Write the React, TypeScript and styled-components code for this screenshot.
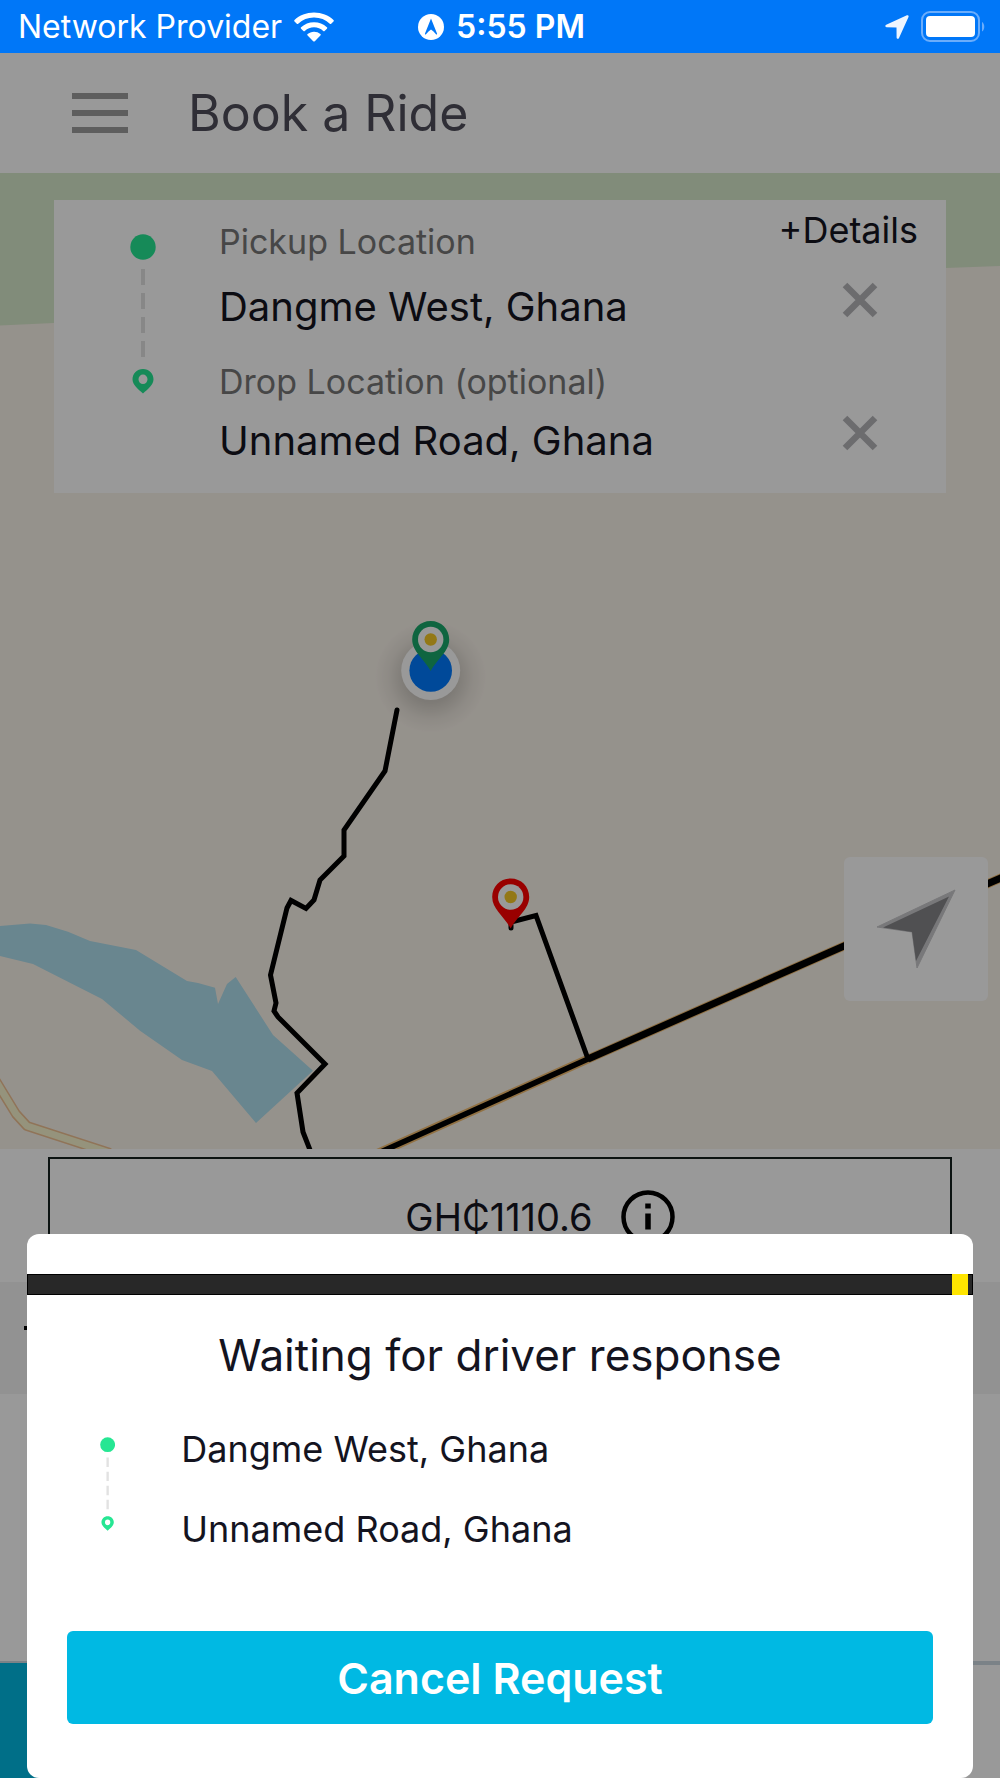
import React from 'react';
import styled, { createGlobalStyle } from 'styled-components';

const GlobalStyle = createGlobalStyle`
  *, *::before, *::after { box-sizing: border-box; }
  body { margin: 0; background: #fff; font-family: Inter, Roboto, 'Liberation Sans', sans-serif; }
  button, input { font: inherit; color: inherit; border: 0; padding: 0; background: none; }
  button { cursor: pointer; }
  svg { display: block; flex: none; }
`;

const Screen = styled.div`
  display: flex;
  flex-direction: column;
  min-height: 100vh;
  color: #14141f;
`;

const StatusBar = styled.header`
  display: grid;
  grid-template-columns: 1fr auto 1fr;
  align-items: center;
  height: 53px;
  padding: 0 15px 0 18px;
  background: #0077f8;
  color: #fff;
  font-size: 32px;
`;

const StatusGroup = styled.div<{ $end?: boolean; $strong?: boolean }>`
  display: flex;
  align-items: center;
  gap: 12px;
  justify-content: ${(p) => (p.$end ? 'flex-end' : 'flex-start')};
  font-weight: ${(p) => (p.$strong ? 600 : 400)};
  white-space: nowrap;
`;

const Stage = styled.main`
  position: relative;
  display: flex;
  flex-direction: column;
  flex: 1;
`;

const Header = styled.div`
  display: flex;
  align-items: center;
  gap: 60px;
  height: 120px;
  padding: 0 72px;
`;

const IconButton = styled.button`
  display: flex;
  flex: none;
  align-items: center;
  justify-content: center;
`;

const PageTitle = styled.h1`
  margin: 0;
  color: #4f4e5a;
  font-size: 50px;
  font-weight: 400;
`;

const MapArea = styled.section`
  position: relative;
  flex: 1;
  min-height: 900px;
  padding: 27px 54px;
`;

const MapCanvas = styled.svg`
  position: absolute;
  inset: 0;
  width: 100%;
  height: 100%;
`;

const TripCard = styled.form`
  position: relative;
  display: flex;
  gap: 63px;
  height: 293px;
  padding: 10px 28px 0 76px;
  background: #fff;
`;

const RailSlot = styled.div`
  padding-top: 24px;
`;

const Fields = styled.div`
  display: flex;
  flex-direction: column;
  gap: 12px;
  flex: 1;
  min-width: 0;
  padding-top: 12px;
`;

const Field = styled.div<{ $height: number }>`
  display: flex;
  flex-direction: column;
  height: ${(p) => p.$height}px;
`;

const FieldLabel = styled.label`
  color: #777;
  font-size: 34px;
  line-height: 40px;
  white-space: nowrap;
`;

const FieldInput = styled.input`
  flex: 1;
  width: 100%;
  min-width: 0;
  font-size: 40px;
  outline: none;
`;

const CardActions = styled.div`
  display: flex;
  flex-direction: column;
  align-items: flex-end;
`;

const DetailsButton = styled.button`
  margin-bottom: 20px;
  font-size: 36px;
  line-height: 40px;
`;

const ClearButton = styled(IconButton)`
  width: 60px;
  height: 60px;
  margin: 0 28px 73px 0;
`;

const LocateButton = styled(IconButton)`
  position: absolute;
  right: 12px;
  bottom: 148px;
  width: 144px;
  height: 144px;
  border-radius: 6px;
  background: #fff;
`;

const FareSection = styled.section`
  height: 133px;
  padding: 8px 48px 0;
`;

const FareBox = styled.div`
  display: flex;
  align-items: center;
  justify-content: center;
  gap: 28px;
  height: 119px;
  padding-left: 80px;
  border: 2px solid #14201f;
  font-size: 38px;
`;

const PaymentStrip = styled.div`
  display: flex;
  align-items: center;
  height: 112px;
  padding: 0 24px;
  background: #f3f3f3;

  &::before {
    content: '';
    width: 16px;
    height: 4px;
    margin-bottom: 20px;
    background: #000;
  }
`;

const Spacer = styled.div`
  height: 267px;
`;

const FooterTabs = styled.div`
  display: grid;
  grid-template-columns: 1fr 1fr;
  height: 117px;
  border-top: 4px solid #ced9e2;

  &::before {
    content: '';
    margin-top: -2px;
    background: #00b9e3;
  }
`;

const Backdrop = styled.div`
  position: absolute;
  inset: 0;
  display: flex;
  align-items: flex-end;
  padding: 0 27px;
  background: rgba(0, 0, 0, 0.4);
`;

const Dialog = styled.div`
  display: flex;
  flex-direction: column;
  width: 100%;
  padding: 40px 0 54px;
  border-radius: 12px;
  background: #fff;
`;

const Progress = styled.div`
  display: flex;
  justify-content: flex-end;
  height: 21px;
  padding-right: 5px;
  background: #282828;
  box-shadow: inset 0 0 0 1px #000;

  &::after {
    content: '';
    width: 16px;
    background: #ffe500;
  }
`;

const DialogTitle = styled.h2`
  margin: 32px 0 0;
  font-size: 44px;
  font-weight: 400;
  line-height: 56px;
  text-align: center;
`;

const DialogTrip = styled.div`
  display: flex;
  gap: 66px;
  margin-top: 46px;
  padding: 0 73px;
`;

const RailInset = styled.div`
  padding-top: 8px;
`;

const Stops = styled.ul`
  display: flex;
  flex-direction: column;
  gap: 40px;
  margin: 0;
  padding: 0;
  list-style: none;
  font-size: 36px;
  line-height: 40px;
`;

const CancelButton = styled.button`
  height: 93px;
  margin: 82px 40px 0;
  border-radius: 6px;
  background: #00b9e3;
  color: #fff;
  font-size: 43px;
  font-weight: 600;
`;

function TripRail({ height }: { height: number }) {
  return (
    <svg width={(height * 26) / 160} height={height} viewBox="0 0 26 160" aria-hidden="true">
      <circle cx="13" cy="13" r="12.7" fill="#26e693" />
      <path d="M13 35V131" stroke="#e2e2e2" strokeWidth="4" strokeDasharray="16 8" />
      <path
        fillRule="evenodd"
        fill="#26e693"
        d="M13 135c-6 0-10.5 4.500-10.500 10.300C2.500 151 8 155 13 159.500c5-4.500 10.500-8.500 10.500-14.200C23.500 139.500 19 135 13 135Zm0 5.500a4.500 4.800 0 1 1 0 9.600 4.500 4.800 0 0 1 0-9.600Z"
      />
    </svg>
  );
}

function CrossIcon() {
  return (
    <svg width="36" height="36" viewBox="0 0 36 36" aria-hidden="true">
      <path d="M3 3 33 33M33 3 3 33" stroke="#b5b5b8" strokeWidth="6.500" />
    </svg>
  );
}

function MapPin({ x, y, color }: { x: number; y: number; color: string }) {
  return (
    <g transform={`translate(${x} ${y})`}>
      <path
        d="M0-18.500C-10.500-18.500-18.500-10.500-18.500 0-18.500 12-7 19 0 31.500 7 19 18.500 12 18.500 0 18.500-10.500 10.500-18.500 0-18.500Z"
        fill={color}
      />
      <circle r="12.700" fill="#fff" />
      <circle r="6.200" fill="#f5c826" />
    </g>
  );
}

function RouteMap() {
  return (
    <MapCanvas viewBox="0 173 1000 976" preserveAspectRatio="xMidYMid slice" role="img" aria-label="Route map">
      <defs>
        <radialGradient id="halo">
          <stop offset="0.45" stopColor="#000" stopOpacity="0.16" />
          <stop offset="0.75" stopColor="#000" stopOpacity="0.05" />
          <stop offset="1" stopColor="#000" stopOpacity="0" />
        </radialGradient>
      </defs>
      <rect x="-500" y="-500" width="2000" height="2500" fill="#f9f3ea" />
      <path d="M-500-500H1500V250L1000 266 946 268 54 323 0 325.500-500 350Z" fill="#d8e9cb" />
      <path
        d="M0 926 30 923.500 46 925 68 931.700 90 941 136 950 187 981 198 983 215 987.700 218 1004 227 984 235.700 977 273 1035 313 1070.700 256 1123 212 1071 182 1060 140 1030.700 102 999 33 964 0 956Z"
        fill="#afdfee"
      />
      <g fill="none" strokeLinejoin="round">
        <path d="M-6 1078 16 1114 27 1126 110 1153" stroke="#f0c193" strokeWidth="10" />
        <path d="M-6 1078 16 1114 27 1126 110 1153" stroke="#f9f6cf" strokeWidth="7" />
        <path d="M374 1155 588 1059 844 946 1010 874" stroke="#f2bd70" strokeWidth="9" />
        <path d="M374 1155 588 1059" stroke="#000" strokeWidth="5.500" />
        <path d="M588 1059 844 946 1010 874" stroke="#000" strokeWidth="7" />
        <g stroke="#000" strokeWidth="5" strokeLinecap="round" strokeLinejoin="miter">
          <path d="M397 710 385 771 344 830V856L320 880 314 900 306 908.500 291 900.500 287 908 270.500 975 276 1003 274 1011 278 1017 325 1064 297 1093 303 1132 312 1155" />
          <path d="M511 928V922L536 915.500 588 1059" />
        </g>
      </g>
      <circle cx="430.700" cy="677" r="56" fill="url(#halo)" />
      <circle cx="430.700" cy="670.500" r="29.500" fill="#fff" />
      <circle cx="430.700" cy="670.500" r="21.300" fill="#007bff" />
      <MapPin x={430.7} y={639.5} color="#1aa86b" />
      <MapPin x={510.7} y={897} color="#ff0000" />
    </MapCanvas>
  );
}

export default function App() {
  return (
    <>
      <GlobalStyle />
      <Screen>
        <StatusBar>
          <StatusGroup>
            <span>Network Provider</span>
            <svg width="40" height="30" viewBox="0 0 40 30" fill="#fff" aria-hidden="true">
              <path d="M20 .500C12.400.500 5.500 3.300.500 7.900c-.5.500-.5 1 0 1.500l2.300 2.300c.4.400 1 .4 1.400 0A23 23 0 0 1 20 5.600a23 23 0 0 1 15.800 6.100c.4.400 1 .4 1.400 0l2.300-2.300c.5-.5.5-1 0-1.500C34.500 3.300 27.600.500 20 .500Z" />
              <path d="M20 10.200c-5 0-9.500 1.900-12.900 5-.5.400-.5 1 0 1.500l2.300 2.200c.4.400 1 .4 1.400 0A13.600 13.600 0 0 1 20 15.300c3.500 0 6.700 1.300 9.200 3.600.4.400 1 .4 1.400 0l2.300-2.200c.5-.5.5-1.100 0-1.500a19 19 0 0 0-12.900-5Z" />
              <path d="M20 19.700c-2.500 0-4.700.9-6.400 2.400-.5.400-.5 1 0 1.500l5.600 5.600c.5.500 1.100.5 1.600 0l5.600-5.600c.5-.5.5-1.100 0-1.500a9.500 9.500 0 0 0-6.400-2.400Z" />
            </svg>
          </StatusGroup>
          <StatusGroup $strong>
            <svg width="26" height="26" viewBox="0 0 26 26" aria-hidden="true">
              <circle cx="13" cy="13" r="13" fill="#fff" />
              <path
                fillRule="evenodd"
                d="M13 4.500 19 19.500c.3.900-.4 1.200-1 .7L15.500 17.500 13 15.500 10.500 17.500 8 20.200c-.6.500-1.300.2-1-.7Z"
                fill="#0077f8"
              />
            </svg>
            <span>5:55 PM</span>
          </StatusGroup>
          <StatusGroup $end>
            <svg width="24" height="24" viewBox="0 0 24 24" fill="#edf5ff" aria-hidden="true">
              <path d="M1.200 9.800 21.900.300c1.100-.5 2.100.5 1.600 1.600L14 22.900c-.6 1.300-2.400 1-2.400-.4L11.500 12.500 1.600 12.300C.100 12.200-.100 10.400 1.200 9.800Z" />
            </svg>
            <svg width="64" height="32" viewBox="0 0 64 32" aria-hidden="true">
              <rect x="1" y="1" width="57" height="29" rx="8" fill="none" stroke="#6badfb" strokeWidth="2" />
              <rect x="5" y="5" width="49" height="21" rx="4" fill="#fff" />
              <path d="M61 11c3 1.500 3 8 0 9.500Z" fill="#6badfb" />
            </svg>
          </StatusGroup>
        </StatusBar>

        <Stage>
          <Header>
            <IconButton type="button" aria-label="Open menu">
              <svg width="56" height="40" viewBox="0 0 56 40" aria-hidden="true">
                <path d="M0 3H56M0 20H56M0 37H56" stroke="#9d9d9d" strokeWidth="6" />
              </svg>
            </IconButton>
            <PageTitle>Book a Ride</PageTitle>
          </Header>

          <MapArea>
            <RouteMap />
            <TripCard>
              <RailSlot>
                <TripRail height={160} />
              </RailSlot>
              <Fields>
                <Field $height={128}>
                  <FieldLabel htmlFor="pickup">Pickup Location</FieldLabel>
                  <FieldInput id="pickup" defaultValue="Dangme West, Ghana" />
                </Field>
                <Field $height={116}>
                  <FieldLabel htmlFor="drop">Drop Location (optional)</FieldLabel>
                  <FieldInput id="drop" defaultValue="Unnamed Road, Ghana" />
                </Field>
              </Fields>
              <CardActions>
                <DetailsButton type="button">+Details</DetailsButton>
                <ClearButton type="button" aria-label="Clear pickup location">
                  <CrossIcon />
                </ClearButton>
                <ClearButton type="button" aria-label="Clear drop location">
                  <CrossIcon />
                </ClearButton>
              </CardActions>
            </TripCard>
            <LocateButton type="button" aria-label="Show my location">
              <svg width="80" height="80" viewBox="0 0 80 80" aria-hidden="true">
                <path d="M1 38 79 1 41 79 36 43Z" fill="#c9c9cc" strokeLinejoin="round" stroke="#c9c9cc" strokeWidth="1" />
                <path d="M7 38.500 73 7.500 40 72 36 43Z" fill="#868689" />
              </svg>
            </LocateButton>
          </MapArea>

          <FareSection>
            <FareBox>
              <span>GH₵1110.6</span>
              <IconButton type="button" aria-label="Fare information">
                <svg width="54" height="54" viewBox="0 0 54 54" aria-hidden="true">
                  <circle cx="27" cy="27" r="24.500" fill="none" stroke="#000" strokeWidth="4.500" />
                  <path d="M27 13.500V18.500M27 23.500V39.500" stroke="#000" strokeWidth="5.500" />
                </svg>
              </IconButton>
            </FareBox>
          </FareSection>
          <PaymentStrip />
          <Spacer />
          <FooterTabs />

          <Backdrop>
            <Dialog role="dialog" aria-modal="true" aria-labelledby="waiting-title">
              <Progress role="progressbar" aria-label="Waiting for driver" />
              <DialogTitle id="waiting-title">Waiting for driver response</DialogTitle>
              <DialogTrip>
                <RailInset>
                  <TripRail height={94} />
                </RailInset>
                <Stops>
                  <li>Dangme West, Ghana</li>
                  <li>Unnamed Road, Ghana</li>
                </Stops>
              </DialogTrip>
              <CancelButton type="button">Cancel Request</CancelButton>
            </Dialog>
          </Backdrop>
        </Stage>
      </Screen>
    </>
  );
}
